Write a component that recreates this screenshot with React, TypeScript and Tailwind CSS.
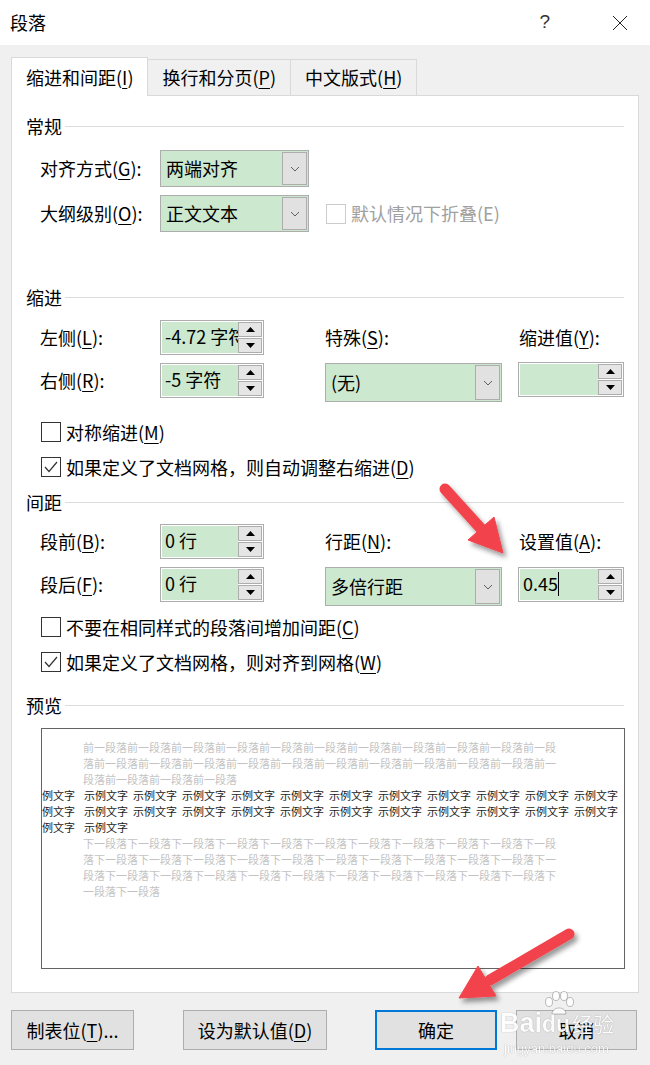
import React from "react";

const FONT = "font-['Noto_Sans_CJK_SC','Microsoft_YaHei',sans-serif]";

function U({ c }: { c: string }) {
  return <span className="underline decoration-1 underline-offset-[3px]">{c}</span>;
}

function Chevron() {
  return (
    <svg width="10" height="6" viewBox="0 0 10 6">
      <polyline points="1,1 5,5 9,1" fill="none" stroke="#606060" strokeWidth="1" />
    </svg>
  );
}

function SpinButtons() {
  return (
    <div className="w-[24px] flex flex-col gap-px">
      <div className="flex-1 bg-[#e5e5e5] border border-[#adadad] flex items-center justify-center">
        <svg width="9" height="5" viewBox="0 0 9 5">
          <polygon points="4.5,0 9,5 0,5" fill="#000" />
        </svg>
      </div>
      <div className="flex-1 bg-[#e5e5e5] border border-[#adadad] flex items-center justify-center">
        <svg width="9" height="5" viewBox="0 0 9 5">
          <polygon points="0,0 9,0 4.5,5" fill="#000" />
        </svg>
      </div>
    </div>
  );
}

function Spinner({ value, cursor, wide }: { value: string; cursor?: boolean; wide?: boolean }) {
  return (
    <div
      className={
        wide
          ? "w-[106px] h-[35px] border border-[#adadad] bg-white p-px flex"
          : "w-[104px] h-[35px] border border-[#adadad] bg-white p-px flex"
      }
    >
      <div className="flex-1 bg-[#cce8cf] overflow-hidden whitespace-nowrap pl-[3px] text-[18px] leading-[29px] text-black">
        {value}
        {cursor && <span className="inline-block w-px h-[24px] bg-black align-[-5px]" />}
      </div>
      <SpinButtons />
    </div>
  );
}

function Dropdown({ value, big }: { value: string; big?: boolean }) {
  return (
    <div
      className={
        big
          ? "w-[177px] h-[39px] border border-[#adadad] bg-[#cce8cf] flex items-stretch"
          : "w-[149px] h-[37px] border border-[#adadad] bg-[#cce8cf] flex items-stretch"
      }
    >
      <div className="flex-1 pl-[5px] flex items-center text-[18px] text-black whitespace-nowrap">{value}</div>
      <div className="w-[25px] my-px mr-px bg-[#e1e1e1] border border-[#adadad] flex items-center justify-center">
        <Chevron />
      </div>
    </div>
  );
}

function Check({ checked, label }: { checked?: boolean; label: React.ReactNode }) {
  return (
    <div className="h-[24px] flex items-center pl-[29px]">
      <div className="w-[20px] h-[20px] border border-[#333333] bg-white flex items-center justify-center">
        {checked && (
          <svg width="14" height="12" viewBox="0 0 14 12">
            <polyline points="1,6 5,10.5 13,1" fill="none" stroke="#333" strokeWidth="1.2" />
          </svg>
        )}
      </div>
      <span className="ml-[5px] text-[18px] leading-[24px] text-black whitespace-nowrap">{label}</span>
    </div>
  );
}

function Heading({ text }: { text: string }) {
  return (
    <div className="h-[24px] flex items-center pl-[14px] pr-[14px]">
      <span className="text-[18px] leading-[24px] text-black">{text}</span>
      <div className="flex-1 h-px bg-[#dcdcdc] ml-[3px]" />
    </div>
  );
}

function Label({ children }: { children: React.ReactNode }) {
  return (
    <div className="w-[120px] h-[35px] flex items-center text-[18px] text-black whitespace-nowrap">{children}</div>
  );
}

const prevBefore = [
  "前一段落前一段落前一段落前一段落前一段落前一段落前一段落前一段落前一段落前一段落前一段",
  "落前一段落前一段落前一段落前一段落前一段落前一段落前一段落前一段落前一段落前一段落前一",
  "段落前一段落前一段落前一段落",
];
const prevAfter = [
  "下一段落下一段落下一段落下一段落下一段落下一段落下一段落下一段落下一段落下一段落下一段",
  "落下一段落下一段落下一段落下一段落下一段落下一段落下一段落下一段落下一段落下一段落下一",
  "段落下一段落下一段落下一段落下一段落下一段落下一段落下一段落下一段落下一段落下一段落下",
  "一段落下一段落",
];

function SampleLine({ n }: { n: number }) {
  const groups = Array.from({ length: n });
  return (
    <div className="h-[16px] whitespace-nowrap text-[11px] leading-[16px] text-[#1a1a1a] flex">
      <span>例文字</span>
      {groups.map((_, i) => (
        <span key={i} className={i === 0 ? "ml-[9px]" : "ml-[5px]"}>
          示例文字
        </span>
      ))}
    </div>
  );
}

export default function App() {
  return (
    <div className={`relative w-[650px] h-[1065px] overflow-hidden bg-[#f0f0f0] ${FONT}`}>
      {/* Title bar */}
      <div className="h-[45px] bg-white flex items-center">
        <span className="pl-[10px] text-[18px] text-black">段落</span>
        <div className="flex-1" />
        <span className="text-[19px] text-[#333] mr-[62px] font-['Liberation_Sans',sans-serif] font-light">?</span>
        <svg width="16" height="16" viewBox="0 0 16 16" className="mr-[22px]">
          <line x1="1" y1="1" x2="15" y2="15" stroke="#222" strokeWidth="1" />
          <line x1="15" y1="1" x2="1" y2="15" stroke="#222" strokeWidth="1" />
        </svg>
      </div>

      {/* Tabs */}
      <div className="mt-[12px] ml-[11px] h-[38px] flex items-end relative z-10">
        <div className="h-[39px] -mb-px bg-white border border-b-0 border-[#d9d9d9] px-[14px] flex items-center text-[18px] text-black">
          缩进和间距(<U c="I" />)
        </div>
        <div className="h-[36px] bg-[#f0f0f0] border border-b-0 border-l-0 border-[#d9d9d9] px-[14px] flex items-center text-[18px] text-black">
          换行和分页(<U c="P" />)
        </div>
        <div className="h-[36px] bg-[#f0f0f0] border border-b-0 border-l-0 border-[#d9d9d9] px-[14px] flex items-center text-[18px] text-black">
          中文版式(<U c="H" />)
        </div>
      </div>

      {/* Panel */}
      <div className="ml-[11px] w-[628px] h-[898px] bg-white border border-[#d9d9d9] flex flex-col">
        <div className="mt-[18px]">
          <Heading text="常规" />
        </div>
        <div className="mt-[12px] flex items-center pl-[28px] h-[37px]">
          <Label>
            对齐方式(<U c="G" />):
          </Label>
          <Dropdown value="两端对齐" />
        </div>
        <div className="mt-[8px] flex items-center pl-[28px] h-[37px]">
          <Label>
            大纲级别(<U c="O" />):
          </Label>
          <Dropdown value="正文文本" />
          <div className="ml-[17px] w-[20px] h-[20px] border border-[#cccccc] bg-white" />
          <span className="ml-[5px] text-[18px] text-[#a0a0a0]">默认情况下折叠(E)</span>
        </div>

        <div className="mt-[53px]">
          <Heading text="缩进" />
        </div>
        <div className="mt-[11px] flex items-start pl-[28px] h-[35px]">
          <Label>
            左侧(<U c="L" />):
          </Label>
          <Spinner value="-4.72 字符" />
          <div className="ml-[61px] w-[177px] h-[35px] flex items-center text-[18px] text-black">
            特殊(<U c="S" />):
          </div>
          <div className="ml-[17px] h-[35px] flex items-center text-[18px] text-black whitespace-nowrap">
            缩进值(<U c="Y" />):
          </div>
        </div>
        <div className="mt-[8px] flex items-start pl-[28px] h-[39px]">
          <Label>
            右侧(<U c="R" />):
          </Label>
          <Spinner value="-5 字符" />
          <div className="ml-[61px]">
            <Dropdown value="(无)" big />
          </div>
          <div className="ml-[16px] -mt-px">
            <Spinner value="" wide />
          </div>
        </div>
        <div className="mt-[18px]">
          <Check
            label={
              <>
                对称缩进(<U c="M" />)
              </>
            }
          />
        </div>
        <div className="mt-[11px]">
          <Check
            checked
            label={
              <>
                如果定义了文档网格，则自动调整右缩进(<U c="D" />)
              </>
            }
          />
        </div>

        <div className="mt-[11px]">
          <Heading text="间距" />
        </div>
        <div className="mt-[10px] flex items-start pl-[28px] h-[35px]">
          <Label>
            段前(<U c="B" />):
          </Label>
          <Spinner value="0 行" />
          <div className="ml-[61px] w-[177px] h-[35px] flex items-center text-[18px] text-black">
            行距(<U c="N" />):
          </div>
          <div className="ml-[17px] h-[35px] flex items-center text-[18px] text-black whitespace-nowrap">
            设置值(<U c="A" />):
          </div>
        </div>
        <div className="mt-[8px] flex items-start pl-[28px] h-[37px]">
          <Label>
            段后(<U c="F" />):
          </Label>
          <Spinner value="0 行" />
          <div className="ml-[61px]">
            <Dropdown value="多倍行距" big />
          </div>
          <div className="ml-[16px]">
            <Spinner value="0.45" cursor wide />
          </div>
        </div>
        <div className="mt-[11px]">
          <Check
            label={
              <>
                不要在相同样式的段落间增加间距(<U c="C" />)
              </>
            }
          />
        </div>
        <div className="mt-[11px]">
          <Check
            checked
            label={
              <>
                如果定义了文档网格，则对齐到网格(<U c="W" />)
              </>
            }
          />
        </div>

        <div className="mt-[19px]">
          <Heading text="预览" />
        </div>
        <div className="mt-[11px] ml-[29px] w-[584px] h-[241px] border border-[#646464] bg-white overflow-hidden pt-[10px]">
          {prevBefore.map((l, i) => (
            <div key={i} className="pl-[41px] h-[16px] whitespace-nowrap text-[11px] leading-[16px] text-[#c3c3c3]">
              {l}
            </div>
          ))}
          <SampleLine n={11} />
          <SampleLine n={11} />
          <SampleLine n={1} />
          {prevAfter.map((l, i) => (
            <div key={i} className="pl-[41px] h-[16px] whitespace-nowrap text-[11px] leading-[16px] text-[#c3c3c3]">
              {l}
            </div>
          ))}
        </div>
      </div>

      {/* Bottom buttons */}
      <div className="mt-[17px] pl-[11px] flex items-center">
        <div className="w-[123px] h-[40px] bg-[#e1e1e1] border border-[#adadad] flex items-center justify-center text-[18px] text-black">
          制表位(<U c="T" />)...
        </div>
        <div className="ml-[49px] w-[144px] h-[40px] bg-[#e1e1e1] border border-[#adadad] flex items-center justify-center text-[18px] text-black">
          设为默认值(<U c="D" />)
        </div>
        <div className="ml-[48px] w-[122px] h-[40px] bg-[#e1e1e1] border-2 border-[#0078d7] flex items-center justify-center text-[18px] text-black">
          确定
        </div>
        <div className="ml-[19px] w-[121px] h-[40px] bg-[#e1e1e1] border border-[#adadad] flex items-center justify-center text-[18px] text-black">
          取消
        </div>
      </div>

      {/* Baidu watermark */}
      <div className="absolute left-[500px] top-[1002px] w-[120px] h-[60px] pointer-events-none text-white [text-shadow:0_0_1px_rgba(0,0,0,0.45)]">
        <div className="flex items-end h-[36px]">
          <span className="text-[27px] leading-[30px] font-bold font-['Liberation_Sans',sans-serif] opacity-90">Bai</span>
          <span className="relative text-[23px] leading-[28px] font-bold font-['Liberation_Sans',sans-serif] opacity-90">
            du
            <svg className="absolute -top-[20px] left-[0px]" width="34" height="26" viewBox="0 0 34 26">
              <g fill="white" stroke="rgba(0,0,0,0.35)" strokeWidth="0.8">
                <ellipse cx="7" cy="12" rx="3.5" ry="4.5" />
                <ellipse cx="14" cy="6" rx="3.5" ry="4.5" />
                <ellipse cx="22" cy="6" rx="3.5" ry="4.5" />
                <ellipse cx="28" cy="12" rx="3.5" ry="4.5" />
                <path d="M10 24 C10 16 24 16 24 24 Z" />
              </g>
            </svg>
          </span>
          <span className="ml-[2px] text-[21px] leading-[30px] opacity-90">经验</span>
        </div>
        <div className="text-[13px] leading-[18px] mt-[2px] ml-[4px] font-['Liberation_Sans',sans-serif] opacity-90">
          jingyan.baidu.com
        </div>
      </div>

      {/* Red arrows overlay */}
      <svg className="absolute inset-0 pointer-events-none" width="650" height="1065" viewBox="0 0 650 1065">
        <defs>
          <filter id="sh" x="-20%" y="-20%" width="140%" height="140%">
            <feDropShadow dx="3" dy="4" stdDeviation="2.5" floodColor="#000" floodOpacity="0.4" />
          </filter>
        </defs>
        <g filter="url(#sh)" fill="#f2434b" stroke="#f2434b">
          <line x1="445" y1="489" x2="484" y2="532" strokeWidth="11" strokeLinecap="round" />
          <polygon points="503,553 468,540 494,517" strokeWidth="1" strokeLinejoin="round" />
          <line x1="569" y1="934" x2="490" y2="980" strokeWidth="11" strokeLinecap="round" />
          <polygon points="459,998 478,966 496,996" strokeWidth="1" strokeLinejoin="round" />
        </g>
      </svg>
    </div>
  );
}
